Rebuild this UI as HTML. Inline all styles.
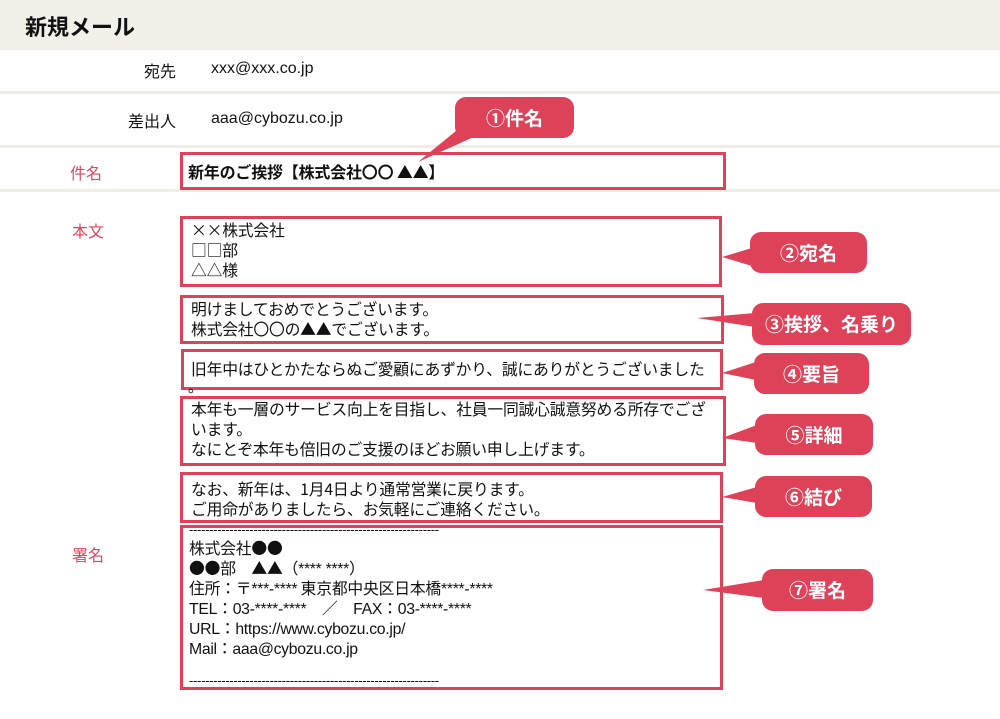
<!DOCTYPE html>
<html><head><meta charset="utf-8"><style>
*{margin:0;padding:0;box-sizing:border-box}
body{width:1000px;height:719px;background:#fff;position:relative;overflow:hidden;font-family:"Liberation Sans","Noto Sans CJK JP",sans-serif;color:#111}
.a{position:absolute;white-space:nowrap}
.hdr{left:0;top:0;width:1000px;height:50px;background:#f3f0e9}
.sep{left:0;width:1000px;height:3px;background:#f0ede5}
.lbl{font-size:16px}
.red{color:#e0475b}
.box{position:absolute;border:3px solid #de4259;font-size:15.8px;line-height:20px;padding:0 0 0 8px;white-space:nowrap;font-family:"Noto Sans CJK JP",sans-serif;letter-spacing:-0.2px}
.co{position:absolute;background:#de4259;color:#fff;border-radius:11px;font-weight:bold;font-size:19px;text-align:center;font-family:"Noto Sans CJK JP",sans-serif}
.sig{font-family:"Liberation Sans","Noto Sans CJK JP",sans-serif;letter-spacing:-0.3px}
.j{font-family:"Noto Sans CJK JP",sans-serif}
.ln{height:20px;line-height:20px;overflow:visible}
</style></head><body>
<div class="a hdr"></div>
<div class="a" style="left:25px;top:10px;font-size:22px;font-weight:bold;">新規メール</div>
<div class="a lbl" style="left:144px;top:58px;">宛先</div>
<div class="a" style="left:211px;top:60px;font-size:16px;">xxx@xxx.co.jp</div>
<div class="a sep" style="top:91px"></div>
<div class="a lbl" style="left:128px;top:108px;">差出人</div>
<div class="a" style="left:211px;top:110px;font-size:16px;">aaa@cybozu.co.jp</div>
<div class="a sep" style="top:145px"></div>
<div class="a lbl red" style="left:70px;top:160px;">件名</div>
<div class="a sep" style="top:189px"></div>
<div class="a lbl red" style="left:72px;top:218px;">本文</div>
<div class="a lbl red" style="left:72px;top:542px;">署名</div>

<div class="box" style="left:180px;top:152px;width:546px;height:38px;font-weight:bold;font-size:16px;line-height:32px;padding-left:5px;">新年のご挨拶【株式会社〇〇 ▲▲】</div>
<div class="box" style="left:180px;top:216px;width:542px;height:71px;padding-top:1px;">××株式会社<br>□□部<br>△△様</div>
<div class="box" style="left:180px;top:295px;width:544px;height:49px;padding-top:1px;">明けましておめでとうございます。<br>株式会社〇〇の▲▲でございます。</div>
<div class="box" style="left:181px;top:349px;width:542px;height:41px;padding-top:7px;padding-left:7px;overflow:hidden;">旧年中はひとかたならぬご愛顧にあずかり、誠にありがとうございました</div>
<div class="a j" style="left:188px;top:376px;font-size:15px;">。</div>
<div class="box" style="left:180px;top:396px;width:546px;height:70px;padding-top:0;overflow:hidden;">本年も一層のサービス向上を目指し、社員一同誠心誠意努める所存でござ<br>います。<br>なにとぞ本年も倍旧のご支援のほどお願い申し上げます。</div>
<div class="box" style="left:180px;top:472px;width:543px;height:51px;padding-top:4px;">なお、新年は、1月4日より通常営業に戻ります。<br>ご用命がありましたら、お気軽にご連絡ください。</div>
<div class="box" style="left:180px;top:525px;width:543px;height:165px;padding-top:0;padding-left:6px;overflow:hidden;">
<div class="sig" style="height:10px;line-height:4px;font-size:13px;">--------------------------------------------------------------</div>
<div class="ln">株式会社●●</div>
<div class="ln">●●部　▲▲<span class="sig">（**** ****）</span></div>
<div class="ln">住所：〒<span class="sig">***-****</span> 東京都中央区日本橋<span class="sig">****-****</span></div>
<div class="ln"><span class="sig">TEL</span>：<span class="sig">03-****-****</span>　／　<span class="sig">FAX</span>：<span class="sig">03-****-****</span></div>
<div class="ln"><span class="sig">URL</span>：<span class="sig">https://www.cybozu.co.jp/</span></div>
<div class="ln"><span class="sig">Mail</span>：<span class="sig">aaa@cybozu.co.jp</span></div>
<div class="sig" style="margin-top:18px;height:10px;line-height:10px;font-size:13px;">--------------------------------------------------------------</div></div>

<svg class="a" style="left:0;top:0" width="1000" height="719">
<g fill="#de4259">
<polygon points="462,126 476,136 418,162"/>
<polygon points="752,248 752,266 722,257"/>
<polygon points="755,313 755,327 697,318"/>
<polygon points="756,362 756,380 722,373"/>
<polygon points="757,425 757,443 722,438"/>
<polygon points="757,487 757,503 722,497"/>
<polygon points="764,580 764,598 703,590"/>
</g></svg>
<div class="co" style="left:455px;top:97px;width:119px;height:41px;line-height:41px;">①件名</div>
<div class="co" style="left:750px;top:232px;width:117px;height:41px;line-height:41px;">②宛名</div>
<div class="co" style="left:752px;top:303px;width:159px;height:42px;line-height:42px;">③挨拶、名乗り</div>
<div class="co" style="left:754px;top:353px;width:115px;height:41px;line-height:41px;">④要旨</div>
<div class="co" style="left:755px;top:414px;width:118px;height:41px;line-height:41px;">⑤詳細</div>
<div class="co" style="left:755px;top:476px;width:117px;height:41px;line-height:41px;">⑥結び</div>
<div class="co" style="left:762px;top:569px;width:111px;height:42px;line-height:42px;">⑦署名</div>
</body></html>
